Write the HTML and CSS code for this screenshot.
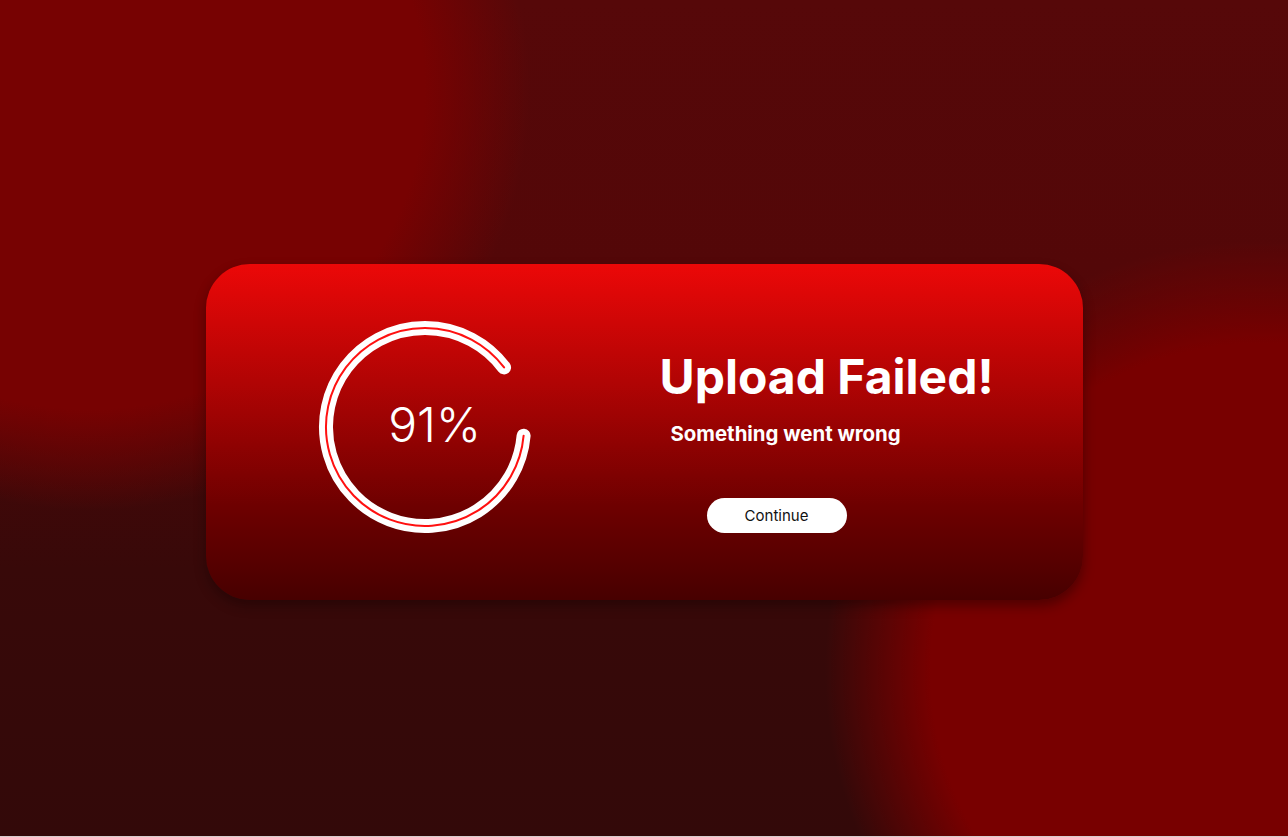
FILE: index.html
```html
<!DOCTYPE html>
<html lang="en">
<head>
<meta charset="utf-8">
<title>Upload Failed</title>
<link rel="stylesheet" href="styles.css">
</head>
<body>
<main class="stage">
  <section class="card">
    <div class="progress">
      <svg class="ring" width="214" height="214" viewBox="0 0 214 214" aria-hidden="true">
        <path class="ring-outer" d="M186.07 47.42 A99 99 0 1 0 205.62 115.63"/>
        <path class="ring-inner" d="M186.07 47.42 A99 99 0 1 0 205.62 115.63"/>
      </svg>
      <div class="percent">91%</div>
    </div>
    <div class="message">
      <h1 class="title">Upload Failed!</h1>
      <p class="subtitle">Something went wrong</p>
      <button class="continue" type="button">Continue</button>
    </div>
  </section>
</main>
</body>
</html>
```

FILE: styles.css
```css
html {
  background: #d8cccc;
}

body {
  margin: 0;
  height: 836px;
  overflow: hidden;
  font-family: Inter, "Noto Sans", sans-serif;
  background:
    radial-gradient(ellipse 440px 420px at 90px 90px, #770202 0%, #770202 76%, rgba(119, 2, 2, 0) 100%),
    radial-gradient(ellipse 440px 430px at 1265px 670px, #780000 0%, #780000 76%, rgba(120, 0, 0, 0) 100%),
    linear-gradient(180deg, #560809 0%, #530708 32%, #380909 68%, #330909 100%);
}

.stage {
  display: flex;
  justify-content: center;
  padding-top: 264px;
}

.card {
  box-sizing: border-box;
  width: 877px;
  height: 336px;
  border-radius: 44px;
  background: linear-gradient(180deg, #ec0808 0%, #b10404 35%, #6e0000 72%, #470000 100%);
  box-shadow: 0 6px 12px rgba(20, 0, 0, 0.4);
  display: flex;
  align-items: flex-start;
  padding: 56px 0 0 112px;
}

.progress {
  position: relative;
  width: 214px;
  height: 214px;
  flex: none;
}

.ring {
  display: block;
}

.ring-outer {
  fill: none;
  stroke: #ffffff;
  stroke-width: 14;
  stroke-linecap: round;
}

.ring-inner {
  fill: none;
  stroke: #ff1010;
  stroke-width: 2;
  stroke-linecap: round;
}

.percent {
  position: absolute;
  inset: 0;
  display: flex;
  align-items: center;
  justify-content: center;
  padding: 0 0 5px 20px;
  color: #ffffff;
  font-size: 48px;
  font-weight: 300;
}

.message {
  display: flex;
  flex-direction: column;
  align-items: flex-start;
  margin: 28px 0 0 128px;
  color: #ffffff;
}

.title {
  margin: 0;
  font-size: 48px;
  font-weight: 700;
  line-height: 58px;
}

.subtitle {
  margin: 16px 0 0 11px;
  font-size: 20.4px;
  font-weight: 700;
  line-height: 24px;
}

.continue {
  margin: 52px 0 0 47px;
  width: 140px;
  height: 35px;
  border: none;
  border-radius: 18px;
  background: #ffffff;
  color: #111111;
  font-family: Inter, "Noto Sans", sans-serif;
  font-size: 15px;
  font-weight: 400;
  padding: 0;
}
```
